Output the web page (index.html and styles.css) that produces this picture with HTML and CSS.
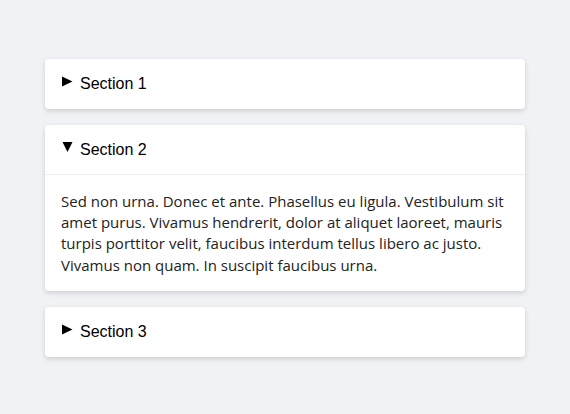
FILE: index.html
```html
<!DOCTYPE html>
<html lang="en">
<head>
<meta charset="utf-8">
<title>Accordion</title>
<link rel="stylesheet" href="styles.css">
</head>
<body>
<div class="accordion">
  <div class="item">
    <div class="header"><svg class="arrow" width="11" height="11" viewBox="0 0 11 11"><polygon points="0,0.5 10.5,5.5 0,10.5"/></svg>Section 1</div>
  </div>
  <div class="item open">
    <div class="header"><svg class="arrow" width="11" height="11" viewBox="0 0 11 11"><polygon points="0.5,0 10.5,0 5.5,10"/></svg>Section 2</div>
    <div class="content">Sed non urna. Donec et ante. Phasellus eu ligula. Vestibulum sit amet purus. Vivamus hendrerit, dolor at aliquet laoreet, mauris turpis porttitor velit, faucibus interdum tellus libero ac justo. Vivamus non quam. In suscipit faucibus urna.</div>
  </div>
  <div class="item">
    <div class="header"><svg class="arrow" width="11" height="11" viewBox="0 0 11 11"><polygon points="0,0.5 10.5,5.5 0,10.5"/></svg>Section 3</div>
  </div>
</div>
</body>
</html>
```
FILE: styles.css
```css
html, body {
  margin: 0;
  height: 100%;
}
body {
  box-sizing: border-box;
  padding-top: 2px;
  background: #f0f2f5;
  display: flex;
  align-items: center;
  justify-content: center;
  font-family: "Open Sans", "Noto Sans", sans-serif;
}
.accordion {
  width: 480px;
  display: flex;
  flex-direction: column;
  gap: 16px;
}
.item {
  background: #fff;
  border-radius: 4px;
  box-shadow: 0 2px 5px rgba(0, 0, 0, 0.15);
  overflow: hidden;
}
.header {
  padding: 15px 16px;
  font-family: "Liberation Sans", Arial, sans-serif;
  font-size: 16px;
  line-height: 19.5px;
  color: #000;
}
.arrow {
  margin-left: 1px;
  margin-right: 7px;
  vertical-align: 2px;
  fill: #000;
}
.open .header {
  border-bottom: 1px solid #eee;
}
.content {
  padding: 15.5px 16px;
  font-size: 15px;
  line-height: 21.3px;
  color: #222;
}
```
